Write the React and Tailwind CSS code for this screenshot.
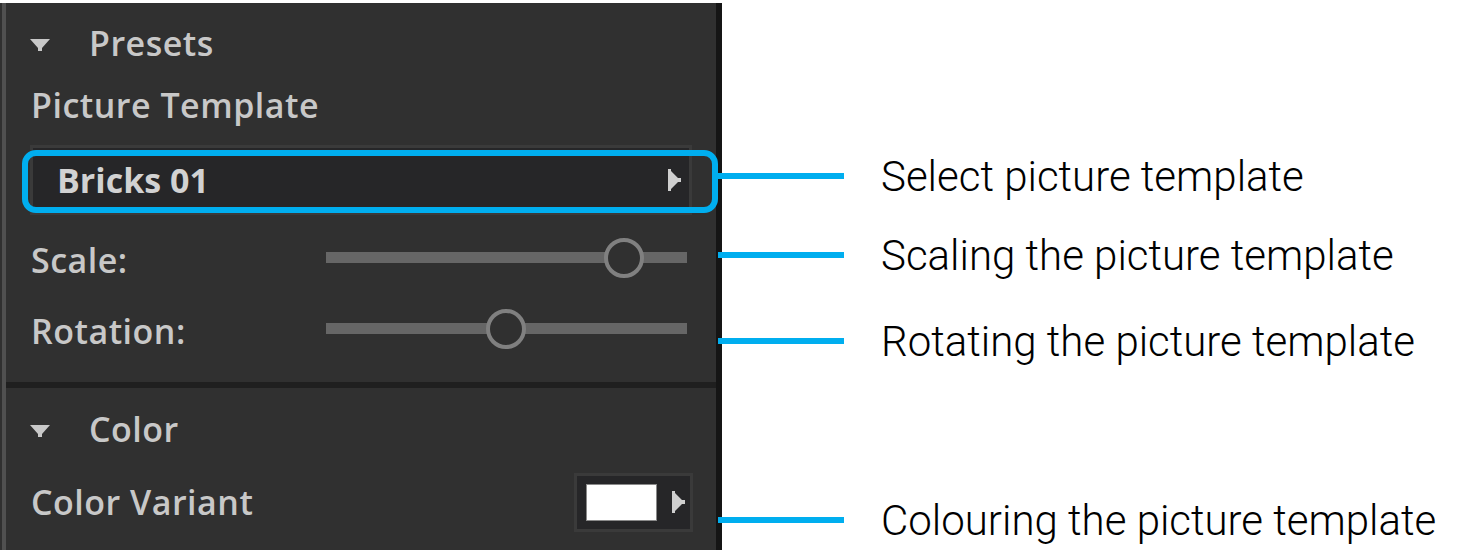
import React from "react";

const LABEL = "font-['Open_Sans','Noto_Sans',sans-serif] font-semibold text-[34px] tracking-[0.5px] leading-[40px] text-[#c8c8c8] whitespace-nowrap";

function DownTri() {
  return (
    <svg width="20" height="12" viewBox="0 0 20 12" className="block">
      <polygon points="0,0 20,0 12,9 12,12 8,12 8,9" fill="#c8c8c8" />
    </svg>
  );
}

function RightTri() {
  return (
    <svg width="13" height="22" viewBox="0 0 13 22" className="block">
      <polygon points="0,0 3,0 3,2 10,9 13,9 13,13 10,13 3,20 3,22 0,22" fill="#cfcfcf" />
    </svg>
  );
}

function Header({ title }) {
  return (
    <div className="flex items-start h-[40px] pl-[24px]">
      <div className="mt-[16px]">
        <DownTri />
      </div>
      <span className={LABEL + " ml-[39px]"}>{title}</span>
    </div>
  );
}

function Slider({ label, thumbLeft }) {
  return (
    <div className="flex items-start h-[40px] pl-[25px]">
      <span className={LABEL + " w-[295px]"}>{label}</span>
      <div className="relative mt-[12px] w-[361px] h-[11px] bg-[#666666]">
        <div
          className="absolute top-[-14px] w-[40px] h-[40px] rounded-full border-[4px] border-[#808080] bg-[#303030]"
          style={{ left: thumbLeft }}
        />
      </div>
    </div>
  );
}

function Annotation({ text, className }) {
  return (
    <div className={"flex items-center h-[44px] " + className}>
      <div className="w-[126px] h-[6px] bg-[#00aeef]" />
      <span className="ml-[37px] font-['Roboto',sans-serif] font-light text-[42px] leading-[43px] text-black whitespace-nowrap">
        {text}
      </span>
    </div>
  );
}

export default function App() {
  return (
    <div className="w-[1460px] h-[556px] bg-white flex items-start overflow-hidden">
      {/* Panel */}
      <div className="mt-[3px] h-[547px] w-[722px] flex bg-[#303030]">
        <div className="w-[2px]" />
        <div className="w-[4px] bg-[#505050]" />
        <div className="flex-1 flex flex-col">
          <div className="mt-[20px]">
            <Header title="Presets" />
          </div>
          <div className={LABEL + " mt-[22px] pl-[25px] h-[40px]"}>Picture Template</div>

          {/* Dropdown */}
          <div className="relative mt-[20px] ml-[24px] mr-[24px] h-[70px]">
            <div className="h-full flex items-center justify-between bg-[#262628] border-[3px] border-[#3a3a3a] pl-[24px] pr-[8px]">
              <span className="font-['Open_Sans','Noto_Sans',sans-serif] font-bold text-[34px] leading-[40px] text-[#d2d2d2] whitespace-nowrap">
                Bricks 01
              </span>
              <RightTri />
            </div>
            <div className="absolute z-20 top-[5px] bottom-[2px] left-[-8px] right-[-26px] rounded-[14px] border-[6px] border-[#00aeef] pointer-events-none" />
          </div>

          <div className="mt-[25px]">
            <Slider label="Scale:" thumbLeft={278} />
          </div>
          <div className="mt-[31px]">
            <Slider label="Rotation:" thumbLeft={160} />
          </div>

          <div className="mt-[31px] h-[6px] bg-[#1f1f1f]" />

          <div className="mt-[21px]">
            <Header title="Color" />
          </div>

          <div className="mt-[33px] h-[40px] flex items-center justify-between pl-[25px] pr-[23px]">
            <span className={LABEL}>Color Variant</span>
            <div className="h-[59px] w-[119px] flex items-center bg-[#262628] border-[3px] border-[#3a3a3a] pl-[9px]">
              <div className="w-[71px] h-[37px] bg-white border border-[#8a8a8a]" />
              <div className="ml-[15px]">
                <RightTri />
              </div>
            </div>
          </div>
        </div>
        <div className="w-[6px] bg-[#151515]" />
      </div>

      {/* Annotations */}
      <div className="relative z-30 -ml-[4px] flex flex-col pt-[154px]">
        <Annotation text="Select picture template" />
        <Annotation text="Scaling the picture template" className="mt-[35px]" />
        <Annotation text="Rotating the picture template" className="mt-[42px]" />
        <Annotation text="Colouring the picture template" className="mt-[135px]" />
      </div>
    </div>
  );
}
